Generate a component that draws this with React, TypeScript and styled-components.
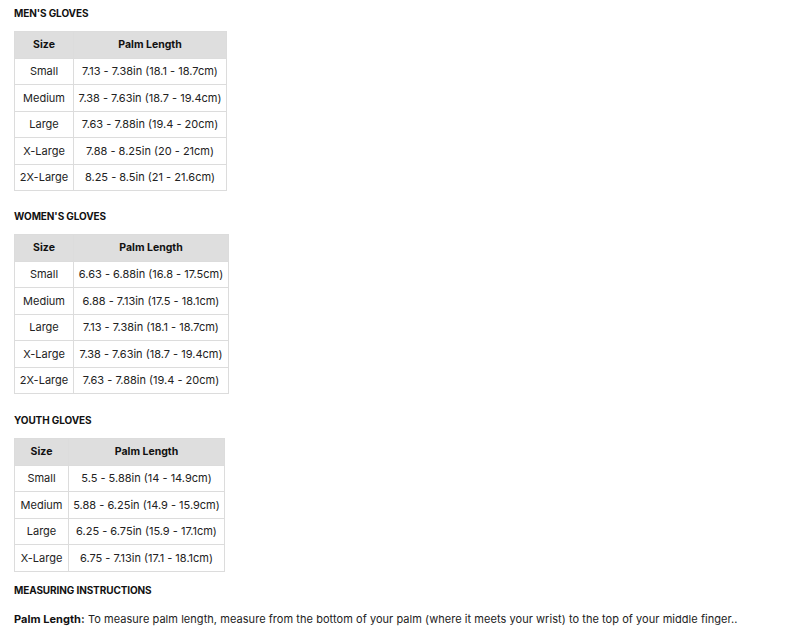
import React from 'react';
import styled, { createGlobalStyle } from 'styled-components';

type Row = [string, string];

interface SizeTable {
  title: string;
  sizeWidth: number;
  palmWidth: number;
  gapAfter: number;
  rows: Row[];
}

const tables: SizeTable[] = [
  {
    title: "MEN'S GLOVES",
    sizeWidth: 59,
    palmWidth: 153,
    gapAfter: 18,
    rows: [
      ['Small', '7.13 - 7.38in (18.1 - 18.7cm)'],
      ['Medium', '7.38 - 7.63in (18.7 - 19.4cm)'],
      ['Large', '7.63 - 7.88in (19.4 - 20cm)'],
      ['X-Large', '7.88 - 8.25in (20 - 21cm)'],
      ['2X-Large', '8.25 - 8.5in (21 - 21.6cm)'],
    ],
  },
  {
    title: "WOMEN'S GLOVES",
    sizeWidth: 59,
    palmWidth: 155,
    gapAfter: 19,
    rows: [
      ['Small', '6.63 - 6.88in (16.8 - 17.5cm)'],
      ['Medium', '6.88 - 7.13in (17.5 - 18.1cm)'],
      ['Large', '7.13 - 7.38in (18.1 - 18.7cm)'],
      ['X-Large', '7.38 - 7.63in (18.7 - 19.4cm)'],
      ['2X-Large', '7.63 - 7.88in (19.4 - 20cm)'],
    ],
  },
  {
    title: 'YOUTH GLOVES',
    sizeWidth: 54,
    palmWidth: 156,
    gapAfter: 11,
    rows: [
      ['Small', '5.5 - 5.88in (14 - 14.9cm)'],
      ['Medium', '5.88 - 6.25in (14.9 - 15.9cm)'],
      ['Large', '6.25 - 6.75in (15.9 - 17.1cm)'],
      ['X-Large', '6.75 - 7.13in (17.1 - 18.1cm)'],
    ],
  },
];

const GlobalStyle = createGlobalStyle`
  body {
    margin: 0;
    background: #fff;
    font-family: Inter, "Noto Sans", sans-serif;
    color: #222;
  }
`;

const Page = styled.div`
  padding: 6px 14px;
`;

const Heading = styled.h4<{ $space?: number }>`
  margin: 0 0 ${p => p.$space ?? 11}px;
  font-size: 10px;
  line-height: 14px;
  font-weight: 700;
  color: #111;
  letter-spacing: -0.1px;
`;

const Section = styled.section<{ $gap: number }>`
  margin-bottom: ${p => p.$gap}px;
`;

const Table = styled.table`
  border-collapse: collapse;
  font-size: 11px;
  line-height: 14px;
  table-layout: fixed;
`;

const HeadCell = styled.th`
  background: #dedede;
  border: 1px solid #dcdcdc;
  height: 25.5px;
  padding: 0 2px;
  font-weight: 700;
  font-size: 10.5px;
  color: #111;
  text-align: center;
`;

const Cell = styled.td`
  border: 1px solid #dcdcdc;
  height: 25.5px;
  padding: 0 2px;
  text-align: center;
  white-space: nowrap;
`;

const Para = styled.p`
  margin: 0;
  font-size: 11px;
  line-height: 14px;
  letter-spacing: 0.05px;
`;

const Strong = styled.strong`
  font-weight: 700;
  color: #111;
`;

const App = () => (
  <Page>
    <GlobalStyle />
    {tables.map(t => (
      <Section key={t.title} $gap={t.gapAfter}>
        <Heading>{t.title}</Heading>
        <Table>
          <colgroup>
            <col style={{ width: t.sizeWidth }} />
            <col style={{ width: t.palmWidth }} />
          </colgroup>
          <thead>
            <tr>
              <HeadCell>Size</HeadCell>
              <HeadCell>Palm Length</HeadCell>
            </tr>
          </thead>
          <tbody>
            {t.rows.map(([size, palm]) => (
              <tr key={size}>
                <Cell>{size}</Cell>
                <Cell>{palm}</Cell>
              </tr>
            ))}
          </tbody>
        </Table>
      </Section>
    ))}
    <Heading $space={15}>MEASURING INSTRUCTIONS</Heading>
    <Para>
      <Strong>Palm Length:</Strong> To measure palm length, measure from the
      bottom of your palm (where it meets your wrist) to the top of your middle
      finger..
    </Para>
  </Page>
);

export default App;
